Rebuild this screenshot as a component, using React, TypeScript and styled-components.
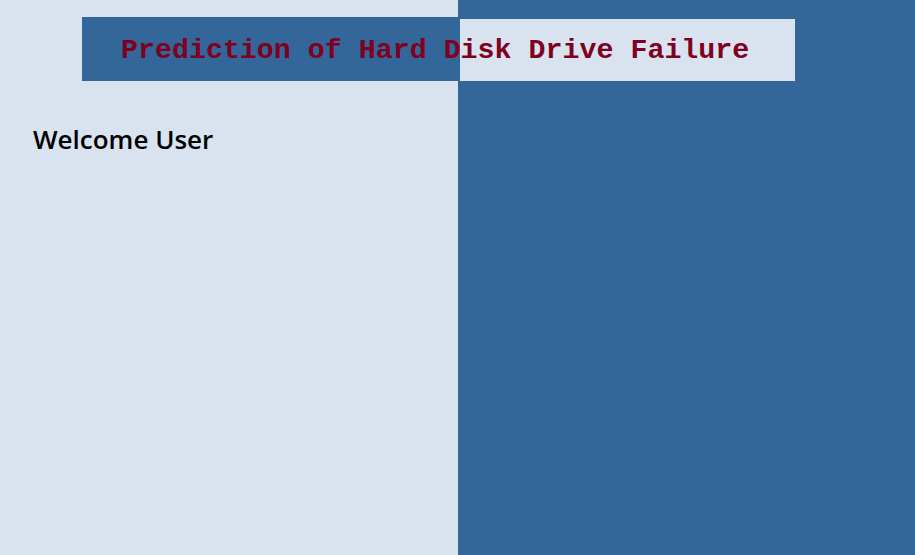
import React from "react";
import styled, { createGlobalStyle } from "styled-components";

const LIGHT = "#d9e3f0";
const DARK = "#336699";

const Global = createGlobalStyle`
  html, body { margin: 0; padding: 0; }
  body { font-family: "Open Sans", "Liberation Sans", sans-serif; }
`;

const Page = styled.div`
  display: grid;
  grid-template-columns: 458px 1fr;
  grid-template-rows: auto 1fr;
  height: 100vh;
  overflow: hidden;
`;

const Pane = styled.div<{ $side: "left" | "right" }>`
  grid-row: 1 / span 2;
  grid-column: ${(p) => (p.$side === "left" ? 1 : 2)};
  background: ${(p) => (p.$side === "left" ? LIGHT : DARK)};
`;

const Banner = styled.header`
  grid-row: 1;
  grid-column: 1 / span 2;
  z-index: 1;
  margin: 17px 0 0 82px;
  width: 713px;
  height: 64px;
  box-sizing: border-box;
  padding: 2px 0 0 39px;
  background:
    linear-gradient(to right, ${DARK} 378px, transparent 378px),
    linear-gradient(${LIGHT}, ${LIGHT}) 378px 2px / 335px 62px no-repeat;
  display: flex;
  align-items: center;
`;

const Title = styled.h1`
  margin: 0;
  font-family: "Liberation Mono", "Courier New", monospace;
  font-weight: bold;
  font-size: 28.3px;
  color: #800020;
  white-space: nowrap;
`;

const Welcome = styled.h2`
  grid-row: 2;
  grid-column: 1;
  z-index: 1;
  margin: 40px 0 0 33px;
  font-family: "Open Sans", sans-serif;
  font-weight: 600;
  font-size: 26px;
  color: #000;
  align-self: start;
`;

export default function App() {
  return (
    <>
      <Global />
      <Page>
        <Pane $side="left" />
        <Pane $side="right" />
        <Banner>
          <Title>Prediction of Hard Disk Drive Failure</Title>
        </Banner>
        <Welcome>Welcome User</Welcome>
      </Page>
    </>
  );
}
